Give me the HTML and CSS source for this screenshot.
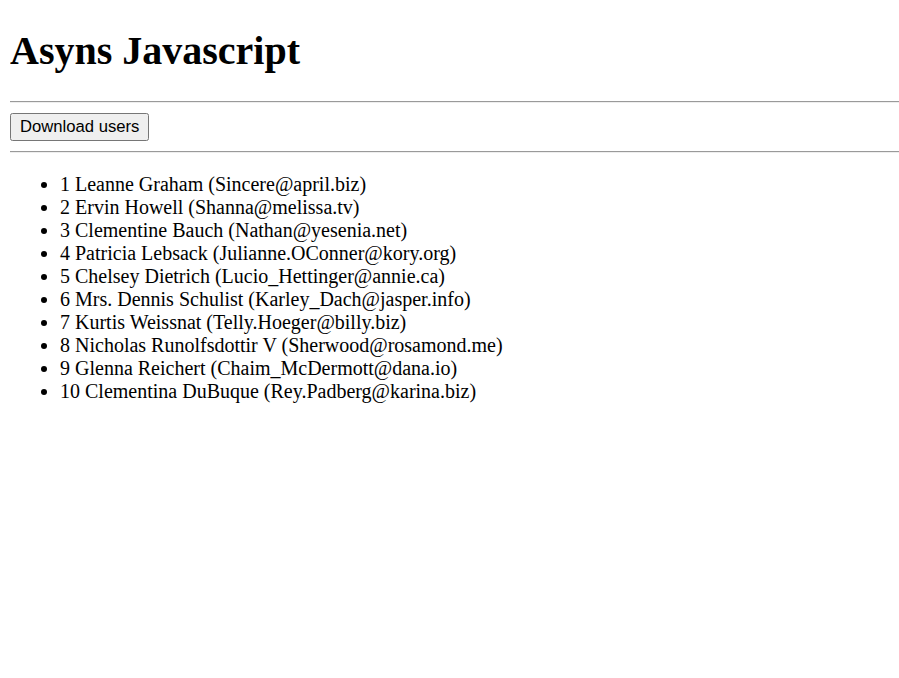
FILE: index.html
```html
<!DOCTYPE html>
<html>
<head>
<meta charset="utf-8">
<title>Asyns Javascript</title>
<link rel="stylesheet" href="styles.css">
</head>
<body class="page">
<h1 class="title">Asyns Javascript</h1>
<hr class="rule">
<button class="btn" type="button">Download users</button>
<hr class="rule">
<ul class="users">
<li>1 Leanne Graham (Sincere@april.biz)</li>
<li>2 Ervin Howell (Shanna@melissa.tv)</li>
<li>3 Clementine Bauch (Nathan@yesenia.net)</li>
<li>4 Patricia Lebsack (Julianne.OConner@kory.org)</li>
<li>5 Chelsey Dietrich (Lucio_Hettinger@annie.ca)</li>
<li>6 Mrs. Dennis Schulist (Karley_Dach@jasper.info)</li>
<li>7 Kurtis Weissnat (Telly.Hoeger@billy.biz)</li>
<li>8 Nicholas Runolfsdottir V (Sherwood@rosamond.me)</li>
<li>9 Glenna Reichert (Chaim_McDermott@dana.io)</li>
<li>10 Clementina DuBuque (Rey.Padberg@karina.biz)</li>
</ul>
</body>
</html>
```

FILE: styles.css
```css
html { background: #fff; }
.page {
  margin: 0 0 10px 10px;
  padding-top: 0;
  font-family: "Liberation Serif", "Times New Roman", serif;
  font-size: 20px;
  color: #000;
}
.title {
  font-size: 40px;
  font-weight: bold;
  margin: 26.8px 0;
}
.rule {
  margin: 10px 0;
  border: 0;
  border-top: 1px solid #9a9a9a;
  border-bottom: 1px solid #eeeeee;
  height: 0;
}
.btn {
  font-family: "Liberation Sans", Arial, sans-serif;
  font-size: 16.67px;
  color: #000;
  background: #efefef;
  border: 1px solid #767676;
  border-radius: 2.5px;
  padding: 2px 9px 0;
  height: 28px;
  line-height: 1;
  margin: 0;
  display: block;
}
.users {
  margin: 20px 0;
  padding-left: 50px;
}
.users li { line-height: 23px; }
```
